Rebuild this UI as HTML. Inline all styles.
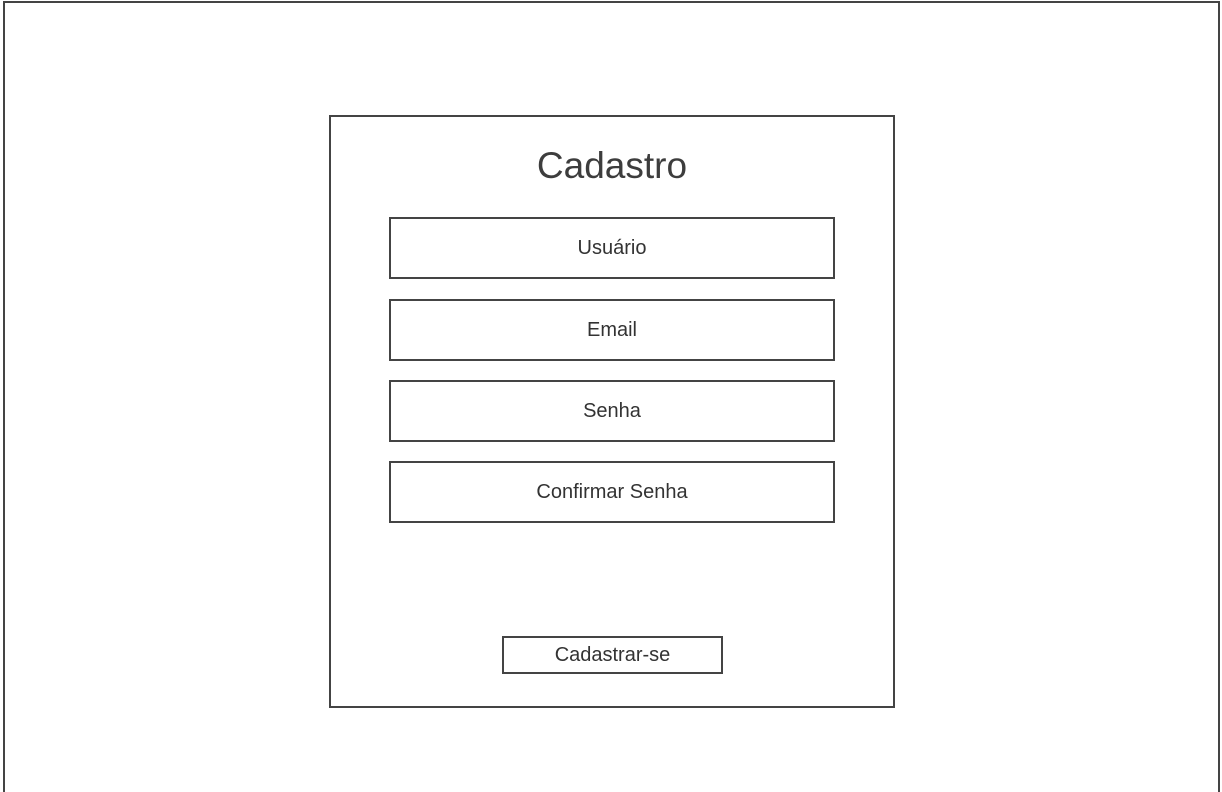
<!DOCTYPE html>
<html><head><meta charset="utf-8"><style>
html,body{margin:0;padding:0;background:#fff;width:1222px;height:792px;overflow:hidden;font-family:"Liberation Sans",Arial,sans-serif;color:#3a3a3a}
.b{position:absolute;border:2px solid #444;box-sizing:border-box}
.t{position:absolute;display:flex;align-items:center;justify-content:center;box-sizing:border-box;border:2px solid #444;font-size:20px;color:#333}
</style></head><body>
<div class="b" style="left:3px;top:1px;width:1217px;height:791px;border-bottom:none"></div>
<div class="b" style="left:329px;top:115px;width:566px;height:593px"></div>
<div style="position:absolute;left:329px;width:566px;top:145px;text-align:center;font-size:37px;color:#3d3d3d">Cadastro</div>
<div class="t" style="left:389px;top:217px;width:446px;height:62px">Usuário</div>
<div class="t" style="left:389px;top:299px;width:446px;height:62px">Email</div>
<div class="t" style="left:389px;top:380px;width:446px;height:62px">Senha</div>
<div class="t" style="left:389px;top:461px;width:446px;height:62px">Confirmar Senha</div>
<div class="t" style="left:502px;top:636px;width:221px;height:38px">Cadastrar-se</div>
</body></html>
